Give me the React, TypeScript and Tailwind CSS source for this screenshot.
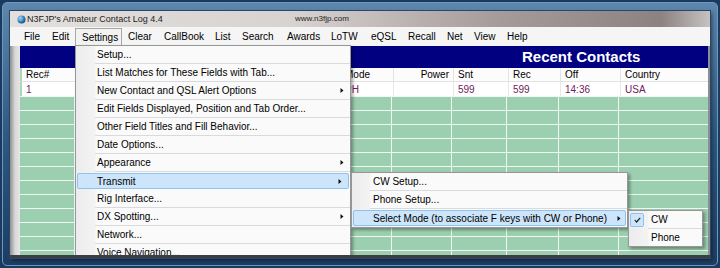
import React from 'react';

type MenuEntry = { label: string; arrow?: boolean; active?: boolean };

const menuBar = [
  { label: 'File', w: 'w-[28px]' },
  { label: 'Edit', w: 'w-[29px]' },
  { label: 'Settings', w: 'w-[47px]', open: true },
  { label: 'Clear', w: 'w-[36px]' },
  { label: 'CallBook', w: 'w-[51px]' },
  { label: 'List', w: 'w-[27px]' },
  { label: 'Search', w: 'w-[45px]' },
  { label: 'Awards', w: 'w-[44px]' },
  { label: 'LoTW', w: 'w-[40px]' },
  { label: 'eQSL', w: 'w-[37px]' },
  { label: 'Recall', w: 'w-[39px]' },
  { label: 'Net', w: 'w-[27px]' },
  { label: 'View', w: 'w-[33px]' },
  { label: 'Help', w: 'w-[30px]' },
];

const settingsItems: MenuEntry[] = [
  { label: 'Setup...' },
  { label: 'List Matches for These Fields with Tab...' },
  { label: 'New Contact and QSL Alert Options', arrow: true },
  { label: 'Edit Fields Displayed, Position and Tab Order...' },
  { label: 'Other Field Titles and Fill Behavior...' },
  { label: 'Date Options...' },
  { label: 'Appearance', arrow: true },
  { label: 'Transmit', arrow: true, active: true },
  { label: 'Rig Interface...' },
  { label: 'DX Spotting...', arrow: true },
  { label: 'Network...' },
  { label: 'Voice Navigation...' },
];

const transmitItems: MenuEntry[] = [
  { label: 'CW Setup...' },
  { label: 'Phone Setup...' },
  { label: 'Select Mode (to associate F keys with CW or Phone)', arrow: true, active: true },
];

// columns hidden behind the open menu carry no text
const columns = [
  { key: 'rec', title: 'Rec#', w: 'w-[55px]', value: '1' },
  { key: 'c1', title: '', w: 'w-[75px]', value: '' },
  { key: 'c2', title: '', w: 'w-[70px]', value: '' },
  { key: 'c3', title: '', w: 'w-[60px]', value: '' },
  { key: 'c4', title: '', w: 'w-[59px]', value: '' },
  { key: 'mode', title: 'Mode', w: 'w-[53px]', value: 'PH' },
  { key: 'power', title: 'Power', w: 'w-[60px]', value: '', right: true },
  { key: 'snt', title: 'Snt', w: 'w-[55px]', value: '599' },
  { key: 'rcv', title: 'Rec', w: 'w-[52px]', value: '599' },
  { key: 'off', title: 'Off', w: 'w-[60px]', value: '14:36' },
  { key: 'country', title: 'Country', w: 'w-[89px]', value: 'USA' },
];

const greenRows = Array.from({ length: 12 }, (_, i) => i);

const Arrow = () => (
  <svg width="4" height="7" viewBox="0 0 4 7" className="shrink-0">
    <path d="M0.5 1 L3.5 3.5 L0.5 6 Z" fill="#111" />
  </svg>
);

const Globe = () => (
  <svg width="9" height="9" viewBox="0 0 9 9" className="shrink-0">
    <defs>
      <radialGradient id="g" cx="35%" cy="35%" r="70%">
        <stop offset="0%" stopColor="#bfe3ff" />
        <stop offset="55%" stopColor="#3b8ad8" />
        <stop offset="100%" stopColor="#154a8c" />
      </radialGradient>
    </defs>
    <circle cx="4.5" cy="4.5" r="4" fill="url(#g)" />
    <path d="M2 3.5 Q3.5 2.5 4.5 4 Q5 6 3 6.5" fill="#6cc070" opacity="0.8" />
  </svg>
);

// one row of a drop-down menu: 17px of content plus a separator line
const MenuRow = ({ item, textPad, arrowPad, gutter }: { item: MenuEntry; textPad: string; arrowPad: string; gutter: string }) => (
  <div className="h-[18px] flex flex-col">
    {item.active ? (
      <div className={`h-[16px] mt-[1px] mx-[1px] flex items-center justify-between rounded-[2px] border border-[#8fc2ee] bg-[#cde5fb] ${textPad} ${arrowPad}`}>
        <span className="-ml-[2px]">{item.label}</span>
        {item.arrow && <Arrow />}
      </div>
    ) : (
      <div className={`h-[17px] flex items-center justify-between ${textPad} ${arrowPad}`}>
        <span>{item.label}</span>
        {item.arrow && <Arrow />}
      </div>
    )}
    {!item.active && <div className={`h-[1px] bg-[#dadada] ${gutter}`} />}
  </div>
);

export default function App() {
  return (
    <div className="w-[720px] h-[268px] bg-[#1b3a5f] p-[2px] font-[Liberation_Sans,Arial,sans-serif] text-black overflow-hidden">
      <div className="h-full rounded-[5px] border border-[#6f98bd] bg-linear-to-b from-[#5d87ad] via-[#2f5a82] to-[#1d3d63] pt-[8px] pl-[7px]">
        {/* application window */}
        <div className="relative w-[700px] h-[247px] flex flex-col overflow-hidden bg-[#f0f0f0] border-b-[3px] border-b-[#3b3f44] shadow-[0_0_0_1px_#27476b,2px_2px_4px_rgba(0,0,0,0.5)]">
          {/* title bar */}
          <div className="h-[16px] shrink-0 flex items-center pl-[7px] bg-[linear-gradient(90deg,#e2dfdd_0%,#d8d3d1_40%,#a59b99_70%,#8c8282_93%,#c6c2c1_100%)]">
            <Globe />
            <span className="w-[268px] shrink-0 ml-[1px] text-[9px] leading-none text-[#1e1e1e]">N3FJP's Amateur Contact Log 4.4</span>
            <span className="text-[8px] leading-none text-[#1e1e1e]">www.n3fjp.com</span>
          </div>

          {/* menu bar */}
          <div className="h-[19px] shrink-0 flex pl-[8px] bg-[#f5f5f5] text-[10px]">
            {menuBar.map(m => (
              <div
                key={m.label}
                className={`${m.w} shrink-0 flex items-center pl-[6px] ${m.open ? 'mt-[1px] border border-b-0 border-[#a8a8a8] bg-[#f2f2f2] pl-[5px]' : ''}`}
              >
                {m.label}
              </div>
            ))}
          </div>

          {/* body */}
          <div className="flex-1 flex min-h-0">
            <div className="w-[10px] shrink-0 bg-linear-to-r from-[#8f8f8f] via-[#d8d8d8] to-[#e6e6e6]" />
            <div className="w-[688px] shrink-0 flex flex-col bg-[#9bcfb0]">
              <div className="h-[1px] bg-[#f0f0f0]" />
              <div className="h-[22px] shrink-0 flex items-center pl-[502px] bg-[#000080] text-white text-[15px] font-bold">
                Recent Contacts
              </div>
              <div className="h-[1px] bg-[#c6e5d2]" />

              {/* header row */}
              <div className="h-[14px] shrink-0 flex bg-[#fcfcfc] border-b border-[#e2e2e2] border-l-2 border-l-[#a8d7ba] text-[10px]">
                {columns.map((c, i) => (
                  <div
                    key={c.key}
                    className={`${c.w} shrink-0 flex items-center px-[4px] ${c.right ? 'justify-end' : ''} ${i < columns.length - 1 ? 'border-r border-[#e4e4e4]' : ''}`}
                  >
                    {c.title}
                  </div>
                ))}
              </div>

              {/* data row */}
              <div className="h-[14px] shrink-0 flex bg-white border-l-2 border-l-[#a8d7ba] text-[10px] text-[#70205c]">
                {columns.map((c, i) => (
                  <div
                    key={c.key}
                    className={`${c.w} shrink-0 flex items-center px-[4px] ${c.right ? 'justify-end' : ''} ${i < columns.length - 1 ? 'border-r border-[#e8e8e8]' : ''}`}
                  >
                    {c.value}
                  </div>
                ))}
              </div>

              {/* empty green rows */}
              {greenRows.map(r => (
                <div key={r} className="h-[14px] shrink-0 flex border-t border-[#eef7f1]">
                  {columns.map((c, i) => (
                    <div key={c.key} className={`${c.w} shrink-0 ${i < columns.length - 1 ? 'border-r border-[#eef7f1]' : ''}`} />
                  ))}
                </div>
              ))}
            </div>
            <div className="w-[2px] shrink-0 bg-[#8a8f94]" />
          </div>

          {/* Settings drop-down */}
          <div className="absolute left-[65px] top-[34px] w-[276px] border border-[#979797] bg-[linear-gradient(90deg,#ececec_0px,#f3f3f3_19px,#fafafa_20px)] text-[10px] shadow-[2px_2px_3px_rgba(0,0,0,0.35)]">
            {settingsItems.map(item => (
              <MenuRow key={item.label} item={item} textPad="pl-[21px]" arrowPad="pr-[6px]" gutter="ml-[19px]" />
            ))}
          </div>

          {/* Transmit submenu */}
          <div className="absolute left-[341px] top-[161px] w-[277px] border border-[#979797] bg-[linear-gradient(90deg,#ececec_0px,#f3f3f3_18px,#fafafa_19px)] text-[10px] shadow-[2px_2px_3px_rgba(0,0,0,0.35)]">
            {transmitItems.map(item => (
              <MenuRow key={item.label} item={item} textPad="pl-[21px]" arrowPad="pr-[4px]" gutter="ml-[18px]" />
            ))}
          </div>

          {/* Select Mode submenu */}
          <div className="absolute left-[618px] top-[199px] w-[75px] border border-[#979797] bg-[linear-gradient(90deg,#ececec_0px,#f3f3f3_19px,#fafafa_20px)] text-[10px] shadow-[2px_2px_3px_rgba(0,0,0,0.35)]">
            <div className="h-[17px] flex items-center">
              <div className="w-[14px] h-[14px] ml-[1px] flex items-center justify-center rounded-[2px] border border-[#8fc2ee] bg-[#cde5fb]">
                <svg width="7" height="6" viewBox="0 0 7 6">
                  <path d="M0.8 3.2 L2.6 5 L6.2 0.8" fill="none" stroke="#222" strokeWidth="1.2" />
                </svg>
              </div>
              <span className="ml-[7px]">CW</span>
            </div>
            <div className="h-[1px] ml-[19px] bg-[#dadada]" />
            <div className="h-[17px] flex items-center pl-[22px]">Phone</div>
          </div>
        </div>
      </div>
    </div>
  );
}
